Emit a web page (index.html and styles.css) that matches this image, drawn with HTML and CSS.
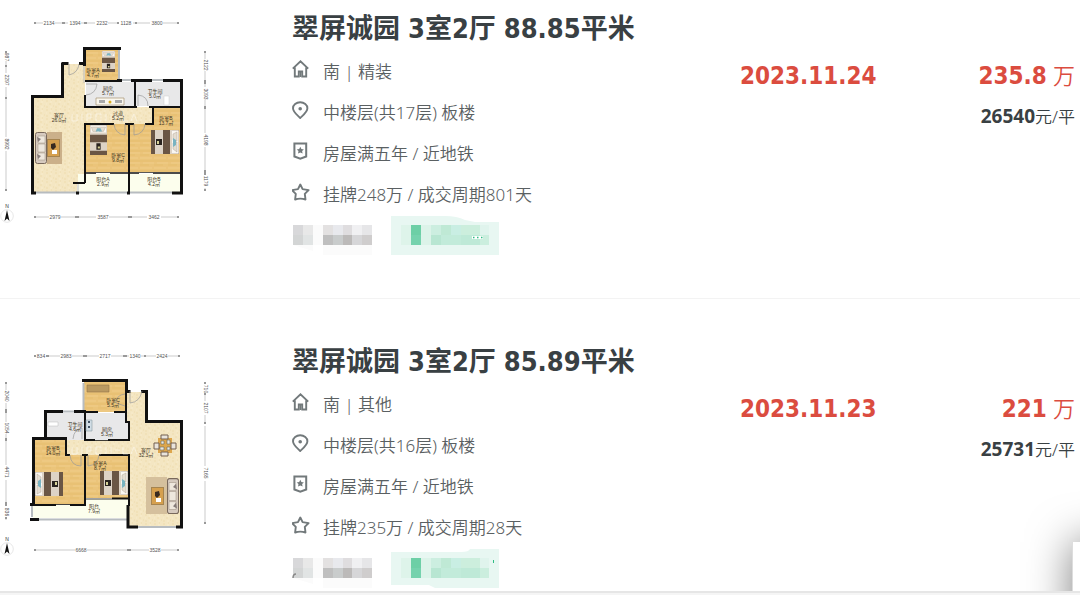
FILE: index.html
```
<!DOCTYPE html>
<html lang="zh-CN">
<head>
<meta charset="utf-8">
<title>翠屏诚园 成交房源</title>
<link rel="stylesheet" href="styles.css">
</head>
<body>
<svg class="defs" width="0" height="0" aria-hidden="true">
  <defs>
    <pattern id="wood" width="14" height="10" patternUnits="userSpaceOnUse">
      <rect width="14" height="10" fill="#ebc47a"/>
      <path d="M0 1H14M0 5H9" stroke="#e3b765" stroke-width=".6"/>
      <path d="M3 3H14M0 8H12" stroke="#f1cf8b" stroke-width=".8"/>
    </pattern>
    <pattern id="stone" width="9" height="9" patternUnits="userSpaceOnUse">
      <rect width="9" height="9" fill="#f4e6c2"/>
      <path d="M1 2h2M6 1h1M4 5h2M8 7h1M1 8h2" stroke="#eedcae"/>
      <path d="M5 3h2M1 5h1M5 8h2" stroke="#f9edcd"/>
    </pattern>
    <symbol id="bed" viewBox="0 0 28 24" preserveAspectRatio="none">
      <path d="M0 0H8V24H0Z" fill="#faf7f2" stroke="#8d7b68" stroke-width=".6"/>
      <path d="M2 2l4 3v6l-4 1zM2 13l4 1v6l-4 2z" fill="#e4ddd2" stroke="#a69886" stroke-width=".4"/>
      <path d="M3 9l3-2v9l-3-2z" fill="#79b3c2"/>
      <path d="M7 0H28V24H7Z" fill="#ddd3c6"/>
      <path d="M9 0h7v24H9zM24 0h4v24h-4z" fill="#6a5645"/>
      <path d="M17 9h6v6h-6z" fill="#29231f"/>
      <path d="M20 10h2v3h-2z" fill="#d7d297"/>
    </symbol>
    <symbol id="sofa" viewBox="0 0 12 32" preserveAspectRatio="none">
      <rect x=".5" y=".5" width="11" height="31" rx="2" fill="#d6cabf" stroke="#78685c"/>
      <path d="M3 4h7v7H3zM3 12h7v8H3zM3 21h7v7H3z" fill="#eee7dd" stroke="#9f9083" stroke-width=".5"/>
      <path d="M2 5l4 2-3 3zM2 22l4 2-3 3z" fill="#867b78"/>
    </symbol>
    <symbol id="table" viewBox="0 0 13 18">
      <rect x=".5" y=".5" width="12" height="17" fill="#d6a04e" stroke="#a58450"/>
      <path d="M4 5l4-1 1 4-3 3-2-2z" fill="#382a20"/>
      <path d="M5 11h5v4H5z" fill="#fff"/>
    </symbol>
    <symbol id="compass" viewBox="0 0 14 20">
      <text x="7" y="5" class="compass-n">N</text>
      <circle cx="7" cy="13" r="6.3" fill="#fff" stroke="#ddd" stroke-width=".7"/>
      <path d="M7 7l2.500 11L7 15.500l-2.500 2.500z" fill="#111"/>
    </symbol>
    <symbol id="i-home" viewBox="0 0 18 18">
      <path d="M.8 8.600L8.500 1.300l7.700 7.300M2.800 7.500v9h4v-5h3.400v5h4v-9" fill="none" stroke="#72797b" stroke-width="1.900"/>
      <path d="M8.500 11v6" stroke="#72797b" stroke-width="1.500"/>
    </symbol>
    <symbol id="i-pin" viewBox="0 0 18 18">
      <path d="M8.200 17C5.500 14.300 1 11 1 7.300a7.200 6 0 0 1 14.400 0C15.400 11 11 14.300 8.200 17z" fill="none" stroke="#72797b" stroke-width="1.900"/>
      <circle cx="8.200" cy="7.800" r="1.800" fill="#72797b"/>
    </symbol>
    <symbol id="i-badge" viewBox="0 0 18 18">
      <path d="M2.400 1.500h11.800v13L8.300 16.800l-5.900-2.300z" fill="none" stroke="#72797b" stroke-width="2"/>
      <path d="M8.300 4.800l1.100 2.300 2.500.3-1.800 1.700.5 2.500-2.300-1.200L6 11.600l.5-2.500-1.800-1.700 2.500-.3z" fill="#72797b"/>
    </symbol>
    <symbol id="i-star" viewBox="0 0 18 18">
      <path d="M8.300 1.500l2.300 4.600 6 1-3.800 3.800.7 5.600q-5.200-1.800-10.400 0l.7-5.600L0 7.100l6-1z" fill="none" stroke="#72797b" stroke-width="1.900" stroke-linejoin="round"/>
    </symbol>
    <symbol id="agent" viewBox="0 0 80 42">
      <path d="M1 10h20v20H1z" fill="#e8e8e8"/><path d="M1 10h10v10H1z" fill="#d8d8da"/><path d="M1 20h10v10H1z" fill="#d3d5d5"/><path d="M11 20h10v10H11z" fill="#e1e4e4"/>
      <path d="M21 10h10v20H21zM1 30h20v6zM31 30h49v10H31z" fill="#fbfbfb"/>
      <path d="M31 10h10v10H31z" fill="#e3e1e1"/><path d="M41 10h10v10H41z" fill="#e8e9ed"/><path d="M51 10h9v10h-9z" fill="#dfdddf"/><path d="M60 10h10v10H60z" fill="#f0f0f2"/><path d="M70 10h10v10H70z" fill="#e6e6e8"/>
      <path d="M31 20h10v10H31z" fill="#bfbfbf"/><path d="M41 20h10v10H41z" fill="#c9cccc"/><path d="M51 20h9v10h-9z" fill="#bcbab9"/><path d="M60 20h10v10H60z" fill="#d6d6d8"/><path d="M70 20h10v10H70z" fill="#cfcdcd"/>
    </symbol>
    <symbol id="chat" viewBox="0 0 108 42">
      <path d="M20 10h10v10H20z" fill="#6dcfa6"/><path d="M20 20h10v10H20z" fill="#75d2ad"/>
      <path d="M10 10h10v20H10z" fill="#def4ea"/><path d="M30 10h10v20H30z" fill="#dcf3e9"/>
      <path d="M40 10h10v10H40z" fill="#cceee0"/><path d="M50 10h10v10H50z" fill="#bfe9d5"/><path d="M60 10h10v10H60z" fill="#c9eee3"/><path d="M70 10h19v10H70z" fill="#cceedd"/><path d="M89 10h9v10h-9z" fill="#e0f4ed"/>
      <path d="M40 20h10v10H40z" fill="#b8e6d2"/><path d="M50 20h20v10H50z" fill="#c2ebda"/><path d="M70 20h19v10H70z" fill="#bee9d7"/><path d="M89 20h9v10h-9z" fill="#cbeede"/>
    </symbol>
  </defs>
</svg>

<main class="list">
  <article class="item">
    <svg class="plan" viewBox="0 0 220 240" role="img" aria-label="户型图">
      <g fill="url(#stone)"><path d="M33 97H63V64H85V107H153V124H86V183H77V192H33Z"/></g>
      <g fill="url(#wood)"><path d="M85 49h34v32H85zM86 124h42v48H86zM130 124h23v-17h28v65h-51z"/></g>
      <path d="M86 82h48v24H86zM136 82h44v24h-44z" fill="#e8e8e9"/>
      <path d="M78 174h50v18H78zM130 174h51v18h-51z" fill="#fcfeed"/>
      <path d="M119 50V80M121 80H132M152 80H163M36 192.500H76M79 192.500H127M130 192.500H172" stroke="#b7bcc0" stroke-width="2"/>
      <path d="M84 65V83M78 182v10" stroke="#bbb" stroke-width="1"/>
      <g fill="none" stroke="#111" stroke-width="3">
        <path d="M84.500 66V48.500H121M61.500 63.500h7M79 63.500h6M62.500 63V96.500H32.500V194M117 80.500h5M131 80.500h21M163 80.500h18.500V194M31 193h5M76 193h3M127 193h3M172 193h11"/>
      </g>
      <g fill="none" stroke="#111" stroke-width="2">
        <path d="M85 81h35M85 95v12h52M135 81v26M149 107h32M153 107v17h-8M85 183v-59h29M125 124h9M129 124v69M73 183h12"/>
        <path d="M86 173h10M110 173h29M153 173h28" stroke-width="1.400"/>
        <path d="M96 172.500h14M139 172.500h14" stroke-width=".7"/>
      </g>
      <g fill="none" stroke="#999" stroke-width=".7"><path d="M69 64v11q9-2 10-11M86 95q10-1 11-11H86M138 106V95q10 1 10 11M114 124q1 10 11 11v-11M134 124v11q10-1 11-11"/></g>
      <use href="#bed" width="21" height="13" transform="translate(115 51) rotate(90)"/>
      <use href="#bed" width="30" height="17" transform="translate(107 125) rotate(90)"/>
      <use href="#bed" width="28" height="24" transform="translate(179 154) rotate(180)"/>
      <path d="M47 132h15v32H47z" fill="#cbb08a"/>
      <use href="#sofa" x="35" y="132" width="12" height="32"/><use href="#table" x="47" y="139" width="13" height="18"/>
      <path d="M96 98h28v7H96z" fill="#faf7ee" stroke="#9b8460" stroke-width=".6"/><path d="M99 100h6v3h-6zM115 100h7v3h-7z" fill="#aaa"/><circle cx="110" cy="102" r="1.500" fill="#dcae26"/>
      <path d="M164 96h5v9h-5z" fill="#fff" stroke="#ccc" stroke-width=".5"/>
      <path class="water" d="M72 114v7h5v-7M82 114v7M87 121v-7h4v4h-4M96 114h5v7h-5zM106 114v7M111 114v7M115 117h5M123 114v7h5M131 121l3-7 3 7"/>
      <g class="rooms">
        <text x="93" y="72">卧室A</text><text x="93" y="77">4.7㎡</text>
        <text x="108" y="90">厨房</text><text x="108" y="95">5.7㎡</text>
        <text x="155" y="93">卫生间</text><text x="155" y="98">5.0㎡</text>
        <text x="59" y="117">客厅</text><text x="59" y="122">26.0㎡</text>
        <text x="118" y="115">过道</text><text x="118" y="120">5.2㎡</text>
        <text x="166" y="120">卧室B</text><text x="166" y="125">13.7㎡</text>
        <text x="118" y="157">卧室C</text><text x="118" y="162">9.8㎡</text>
        <text x="103" y="181">阳台A</text><text x="103" y="186">2.9㎡</text>
        <text x="154" y="181">阳台B</text><text x="154" y="186">4.2㎡</text>
      </g>
      <path class="dim" d="M34 23H43M55 23H68M81 23H95M108 23H119M133 23H150M163 23H179M34 217H49M61 217H96M109 217H147M161 217H179M6 51v3M6 61v12M6 87V137M6 151V191M205 51V59M205 71V87M205 100V133M205 147V174M205 188v3"/>
      <path class="tick" d="M34 23h2M62 23h3M84 23h3M117 23h2M135 23h2M177 23h2M34 217h2M75 217h4M128 217h4M177 217h2M6 51v2M6 65v2M6 97v2M6 189v2M205 51v2M205 80v4M205 106v3M205 170v5M205 189v2"/>
      <g class="dims">
        <text x="49" y="24.500">2134</text><text x="75" y="24.500">1394</text><text x="102" y="24.500">2232</text><text x="126" y="24.500">1128</text><text x="157" y="24.500">3800</text>
        <text x="55" y="218.500">2979</text><text x="103" y="218.500">3587</text><text x="154" y="218.500">3462</text>
        <text transform="translate(5 57) rotate(90)">987</text><text transform="translate(5 80) rotate(90)">2297</text><text transform="translate(5 144) rotate(90)">8992</text>
        <text transform="translate(204 65) rotate(90)">2122</text><text transform="translate(204 94) rotate(90)">3093</text><text transform="translate(204 140) rotate(90)">4198</text><text transform="translate(204 181) rotate(90)">1179</text>
      </g>
      <use href="#compass" x="0" y="203" width="14" height="20"/>
    </svg>
    <div class="info">
      <h2 class="title"><span>翠屏诚园</span><span>3室2厅</span><span>88.85平米</span></h2>
      <ul class="facts">
        <li><svg class="icon"><use href="#i-home"/></svg>南 | 精装</li>
        <li><svg class="icon"><use href="#i-pin"/></svg>中楼层(共17层) 板楼</li>
        <li><svg class="icon"><use href="#i-badge"/></svg>房屋满五年 / 近地铁</li>
        <li><svg class="icon"><use href="#i-star"/></svg>挂牌248万 / 成交周期801天</li>
      </ul>
      <div class="contact">
        <svg class="agent"><use href="#agent"/></svg>
        <svg class="chat" viewBox="0 0 108 42"><path d="M0 1H54Q66 1 74 5L84 7H108V40H0Z" fill="#e8f7f2"/><use href="#chat"/><path d="M81 22.500h11" stroke="#fff" stroke-width="3"/><path d="M82 22.500h1.500M86 22.500h1.500M90 22.500h1.500" stroke="#2fbd84" stroke-width="1.500"/></svg>
      </div>
    </div>
    <time class="date" datetime="2023-11-24">2023.11.24</time>
    <div class="price">
      <p class="total"><strong>235.8</strong> 万</p>
      <p class="unit"><strong>26540</strong>元/平</p>
    </div>
  </article>

  <article class="item">
    <svg class="plan" viewBox="0 0 220 240" role="img" aria-label="户型图">
      <path d="M126 59H146V89H181V194H129V122H67V107H129V88H126Z" fill="url(#stone)"/>
      <path d="M84 49h42v30H84zM35 107h31v15h19v49H35zM86 122h42v43H86z" fill="url(#wood)"/>
      <path d="M47 80h37v27H47zM86 80h39v9h4v18H86z" fill="#e8e8e9"/>
      <path d="M33 172h53v-6h42v19H33z" fill="#fcfeed"/>
      <path d="M83.500 50V78M63 78.500H74M32 173V184M39 186.500H127M138 194H176" stroke="#b7bcc0" stroke-width="2"/>
      <g fill="none" stroke="#111" stroke-width="3">
        <path d="M82 47.500h44.500v11h4M141 58.500h5.500v30h35V195M86 78.500H74M63 78.500H45.500V105.500M67 105.500H33.500V172M30 186.500h9M128 172v22h10M176 194h7M30 171.500h5"/>
      </g>
      <g fill="none" stroke="#111" stroke-width="2">
        <path d="M126 58v31h3v18h-21M85 78v29h10M86 79h12M114 79h12M66 107v15h4M82 122h6M99 122h30M129 121v52M85 122v50H70M35 172h21M112 165.500h16"/>
        <path d="M56 171.500h14M86 166h26M95 107.500h13" stroke-width=".8"/>
      </g>
      <g fill="none" stroke="#999" stroke-width=".7"><path d="M130 58v12q10-1 12-12M73 106q1-10 9-11v11M70 122q1 11 11 11v-11M88 122v11q10-1 11-11M125 61q-9 1-9 9l9 3"/></g>
      <path d="M87 52h22v7H87z" fill="#b99961" stroke="#927446" stroke-width=".6"/>
      <path d="M48 89h10v4H48z" fill="#fff" stroke="#bbb" stroke-width=".5"/>
      <path d="M86 87h6v11h-6z" fill="#d1dde5" stroke="#8c9aa2" stroke-width=".6"/><path d="M88 89h2M88 94h2" stroke="#456" stroke-width="2"/>
      <use href="#bed" x="35" y="139" width="28" height="24"/>
      <use href="#bed" width="28" height="24" transform="translate(128 162) rotate(180)"/>
      <path d="M146 144h21v37h-21z" fill="#d5c09d"/><use href="#table" x="151" y="154" width="13" height="18"/>
      <use href="#sofa" width="12" height="36" transform="translate(179 181) rotate(180)"/>
      <path d="M158 105h14v15h-14z" fill="#dda64d"/>
      <path d="M161 102h7v4h-7zM161 119h7v4h-7zM154 110h5v6h-5zM171 110h5v6h-5z" fill="#e9e4dc" stroke="#725f4e" stroke-width="1"/>
      <path d="M161 108h3v3h-3zM167 107h3v4h-3zM160 114h4v3h-4zM167 114h3v3h-3z" fill="#e8e8e3" stroke="#67645c" stroke-width=".6"/>
      <path class="water" d="M72 114v7h5v-7M82 114v7M87 121v-7h4v4h-4M96 114h5v7h-5zM106 114v7M111 114v7M115 117h5M123 114v7h5M131 121l3-7 3 7"/>
      <g class="rooms">
        <text x="113" y="69">卧室C</text><text x="113" y="74">5.5㎡</text>
        <text x="75" y="93">卫生间</text><text x="75" y="98">4.6㎡</text>
        <text x="107" y="98">厨房</text><text x="107" y="103">5.3㎡</text>
        <text x="53" y="117">卧室B</text><text x="53" y="122">14.0㎡</text>
        <text x="146" y="119">客厅</text><text x="146" y="124">32.3㎡</text>
        <text x="100" y="132">卧室A</text><text x="100" y="137">8.7㎡</text>
        <text x="94" y="175">阳台</text><text x="94" y="180">7.9㎡</text>
      </g>
      <path class="dim" d="M46 23H60M72 23H99M111 23H129M141 23H156M168 23H180M34 217H75M87 217H149M161 217H179M6 49V57M6 70V89M6 101V132M6 147V173M6 185v2M205 49v2M205 60V68M205 82V91M205 93V133M205 148V191"/>
      <path class="tick" d="M34 23h2M46 23h3M83 23h4M123 23h4M144 23h2M178 23h2M34 217h2M127 217h4M177 217h2M6 49v2M6 76v4M6 105v3M6 169v4M6 184v2M205 49v2M205 60v2M205 89v2M205 189v2"/>
      <g class="dims">
        <text x="41" y="24.500">834</text><text x="66" y="24.500">2983</text><text x="105" y="24.500">2717</text><text x="135" y="24.500">1340</text><text x="162" y="24.500">2424</text>
        <text x="81" y="218.500">6668</text><text x="155" y="218.500">3528</text>
        <text transform="translate(5 63) rotate(90)">2040</text><text transform="translate(5 95) rotate(90)">1054</text><text transform="translate(5 139) rotate(90)">4471</text><text transform="translate(5 179) rotate(90)">836</text>
        <text transform="translate(204 56) rotate(90)">710</text><text transform="translate(204 75) rotate(90)">2107</text><text transform="translate(204 140) rotate(90)">7165</text>
      </g>
      <use href="#compass" x="0" y="203" width="14" height="20"/>
    </svg>
    <div class="info">
      <h2 class="title"><span>翠屏诚园</span><span>3室2厅</span><span>85.89平米</span></h2>
      <ul class="facts">
        <li><svg class="icon"><use href="#i-home"/></svg>南 | 其他</li>
        <li><svg class="icon"><use href="#i-pin"/></svg>中楼层(共16层) 板楼</li>
        <li><svg class="icon"><use href="#i-badge"/></svg>房屋满五年 / 近地铁</li>
        <li><svg class="icon"><use href="#i-star"/></svg>挂牌235万 / 成交周期28天</li>
      </ul>
      <div class="contact">
        <svg class="agent" viewBox="0 0 80 42"><use href="#agent"/><path d="M1 30q0-4 3-4" stroke="#888" stroke-width="1.500" fill="none"/></svg>
        <svg class="chat" viewBox="0 0 108 42"><path d="M0 4H70Q78 4 79 1H108V40H44L38 37H0Z" fill="#e8f7f2"/><use href="#chat"/><path d="M102.500 12v3" stroke="#2fbd84"/></svg>
      </div>
    </div>
    <time class="date" datetime="2023-11-23">2023.11.23</time>
    <div class="price">
      <p class="total"><strong>221</strong> 万</p>
      <p class="unit"><strong>25731</strong>元/平</p>
    </div>
  </article>
</main>
<footer class="status-bar"></footer>
<aside class="side-panel"></aside>
</body>
</html>
```
FILE: styles.css
```
* {
  box-sizing: border-box;
}

body {
  margin: 0;
  min-height: 100vh;
  display: flex;
  flex-direction: column;
  overflow: hidden;
  background: #fff;
  color: #394043;
  font-family: "Noto Sans", "Noto Sans CJK SC", sans-serif;
}

h2, p, ul {
  margin: 0;
  padding: 0;
}

.defs {
  position: absolute;
}

.list {
  flex: 1;
}

.item {
  display: grid;
  grid-template-columns: 292px 448px 1fr auto;
  align-items: start;
  padding: 0 5px 41px 0;
  border-bottom: 1px solid #f3f3f3;
}

.item + .item {
  padding-top: 34px;
  padding-bottom: 1px;
  border-bottom: 0;
}

.plan {
  display: block;
  width: 220px;
}

.title {
  display: flex;
  gap: 8px;
  padding-top: 7px;
  font-family: "DejaVu Sans Condensed", "Noto Sans CJK SC", sans-serif;
  font-size: 27px;
  line-height: 43px;
  font-weight: 700;
  white-space: nowrap;
}

.facts {
  list-style: none;
}

.facts li {
  display: flex;
  align-items: center;
  gap: 13px;
  height: 41px;
  font-size: 17px;
  font-weight: 350;
  color: #5a6062;
}

.icon {
  width: 18px;
  height: 18px;
  margin-bottom: 3px;
}

.contact {
  display: flex;
  gap: 19px;
  padding-top: 1px;
}

.agent {
  width: 80px;
  height: 42px;
}

.chat {
  width: 108px;
  height: 42px;
}

.date,
.total {
  padding-top: 58px;
  font-family: "DejaVu Sans Condensed", "Noto Sans CJK SC", sans-serif;
  font-size: 24px;
  line-height: 36px;
  font-weight: 700;
  color: #db4c3f;
}

.price {
  text-align: right;
}

.total {
  font-size: 22px;
  font-weight: 350;
}

.total strong {
  font-size: 24px;
  font-weight: 700;
}

.unit {
  padding-top: 8px;
  font-size: 17px;
  line-height: 26px;
  font-weight: 350;
}

.unit strong {
  font-size: 19px;
  font-weight: 700;
}

.rooms text,
.dims text,
.compass-n {
  font-family: "Liberation Sans", "Noto Sans CJK SC", sans-serif;
  text-anchor: middle;
}

.rooms text {
  font-size: 5px;
  fill: #3d3424;
}

.dims text {
  font-size: 5px;
  fill: #555;
}

.compass-n {
  font-size: 5px;
  fill: #333;
}

.dim {
  fill: none;
  stroke: #aaa;
  stroke-width: 0.6;
}

.tick {
  fill: none;
  stroke: #999;
  stroke-width: 2;
}

.water {
  fill: none;
  stroke: #fff;
  stroke-opacity: 0.45;
}

.status-bar {
  position: relative;
  z-index: 2;
  height: 4px;
  background: #f5f5f5;
  border-top: 2px solid #e6e6e6;
}

.side-panel {
  position: fixed;
  right: -52px;
  bottom: -60px;
  z-index: 1;
  width: 60px;
  height: 113px;
  background: #fff;
  border-left: 1px solid #ddd;
  box-shadow: 0 0 44px rgba(0, 0, 0, 0.5);
}
```
